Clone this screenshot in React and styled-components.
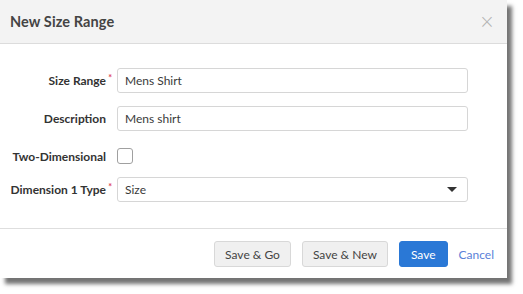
import styled, { createGlobalStyle } from "styled-components";

const GlobalStyle = createGlobalStyle`
  html, body {
    margin: 0;
    padding: 0;
    background: #ffffff;
  }
  body {
    font-family: "Lato", "Open Sans", sans-serif;
    color: #333;
  }
`;

const Page = styled.div`
  width: 523px;
  height: 294px;
  background: #fff;
`;

const Modal = styled.div`
  width: 507px;
  height: 278px;
  background: #fff;
  display: flex;
  flex-direction: column;
  box-shadow: 5px 6px 4px rgba(0, 0, 0, 0.55);
`;

const Header = styled.div`
  height: 43px;
  flex: none;
  display: flex;
  align-items: center;
  justify-content: space-between;
  padding: 0 12px 0 10px;
  background: #f3f3f3;
  border-bottom: 1px solid #dcdcdc;
`;

const Title = styled.h2`
  margin: 0;
  font-size: 14.5px;
  font-weight: 700;
  color: #444;
  letter-spacing: 0.1px;
`;

const Close = styled.span`
  font-size: 19px;
  line-height: 1;
  color: #b3b3b3;
  font-family: "DejaVu Sans", sans-serif;
  font-weight: 300;
`;

const Body = styled.div`
  flex: 1;
  padding: 24px 0 0 0;
  display: grid;
  grid-template-columns: 106px 351px;
  column-gap: 11px;
  row-gap: 13px;
  align-content: start;
  border-bottom: 1px solid #dedede;
`;

const Label = styled.label`
  display: flex;
  align-items: center;
  justify-content: flex-end;
  font-size: 12px;
  font-weight: 700;
  color: #333;
  white-space: nowrap;
  position: relative;
  margin-top: ${(p) => (p.$offset ? "4px" : "0")};
  height: ${(p) => (p.$offset ? "16px" : "auto")};
`;

const Star = styled.span`
  position: absolute;
  right: -6px;
  top: 4px;
  color: #e0455a;
  font-size: 9px;
  font-weight: 700;
`;

const Input = styled.div`
  height: 25px;
  box-sizing: border-box;
  border: 1px solid #d6d6d6;
  border-radius: 3px;
  padding: 0 10px 0 7px;
  display: flex;
  align-items: center;
  justify-content: space-between;
  font-size: 12px;
  color: #3a3a3a;
`;

const Caret = styled.span`
  width: 0;
  height: 0;
  border-left: 5px solid transparent;
  border-right: 5px solid transparent;
  border-top: 5px solid #333;
`;

const Checkbox = styled.span`
  display: block;
  width: 16px;
  height: 16px;
  box-sizing: border-box;
  border: 1px solid #a0a0a0;
  border-radius: 3px;
  margin-top: 4px;
  background: #fff;
`;

const Footer = styled.div`
  height: 49px;
  flex: none;
  display: flex;
  align-items: center;
  justify-content: flex-end;
  padding: 1px 13px 0 0;
  gap: 11px;
  box-sizing: border-box;
`;

const Button = styled.button`
  height: 26px;
  padding: 0 ${(p) => (p.$primary ? "11px" : "10px")};
  border-radius: 3px;
  font-family: "Lato", sans-serif;
  font-size: 12px;
  cursor: pointer;
  border: 1px solid ${(p) => (p.$primary ? "#2a78d6" : "#d8d8d8")};
  background: ${(p) => (p.$primary ? "#2a78d6" : "#f0f0f0")};
  color: ${(p) => (p.$primary ? "#fff" : "#444")};
`;

const Link = styled.a`
  font-size: 12px;
  color: #5a7fd8;
  text-decoration: none;
`;

export default function App() {
  return (
    <Page>
      <GlobalStyle />
      <Modal>
        <Header>
          <Title>New Size Range</Title>
          <Close>×</Close>
        </Header>
        <Body>
          <Label>
            Size Range<Star>*</Star>
          </Label>
          <Input>Mens Shirt</Input>

          <Label>Description</Label>
          <Input>Mens shirt</Input>

          <Label $offset>Two-Dimensional</Label>
          <div>
            <Checkbox />
          </div>

          <Label>
            Dimension 1 Type<Star>*</Star>
          </Label>
          <Input>
            Size
            <Caret />
          </Input>
        </Body>
        <Footer>
          <Button>Save &amp; Go</Button>
          <Button>Save &amp; New</Button>
          <Button $primary>Save</Button>
          <Link href="#">Cancel</Link>
        </Footer>
      </Modal>
    </Page>
  );
}
